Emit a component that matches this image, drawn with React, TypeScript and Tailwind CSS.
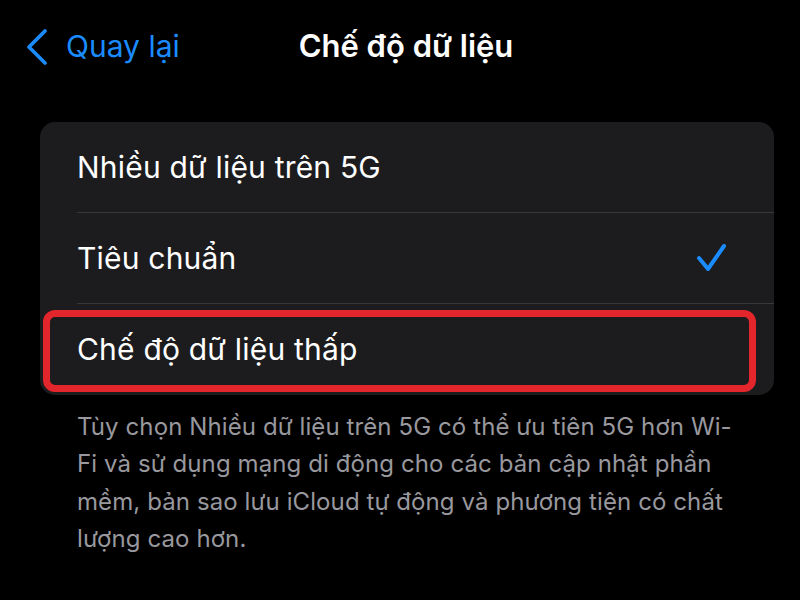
import React from 'react';

const rows = ['Nhiều dữ liệu trên 5G', 'Tiêu chuẩn', 'Chế độ dữ liệu thấp'];

const App: React.FC = () => {
  return (
    <div
      className="relative w-[800px] h-[600px] overflow-hidden bg-black text-white"
      style={{ fontFamily: 'Inter, "Noto Sans", sans-serif' }}
    >
      {/* nav bar */}
      <div className="relative flex items-center h-[92px] pl-[26px]">
        <svg width="22" height="36" viewBox="0 0 22 36" className="mt-[1px]">
          <path d="M19 2 L3 18 L19 34" fill="none" stroke="#1a8cff" strokeWidth="3.6" strokeLinecap="round" strokeLinejoin="round" />
        </svg>
        <span className="ml-[18px] text-[30px] text-[#1a8cff]">Quay lại</span>
        <span className="absolute left-1/2 -translate-x-1/2 ml-[6px] text-[31px] font-semibold">
          Chế độ dữ liệu
        </span>
      </div>

      {/* options card */}
      <div className="ml-[40px] mt-[30px] w-[734px] rounded-[15px] bg-[#1c1c1e]">
        {rows.map((label, i) => (
          <div key={label} className="pl-[37px]">
            <div
              className={`flex items-center justify-between h-[91px] pr-[46px] ${
                i < rows.length - 1 ? 'border-b border-[#38383a]' : ''
              }`}
            >
              <span className="text-[30px] tracking-[0.2px]">{label}</span>
              {i === 1 && (
                <svg width="32" height="32" viewBox="0 0 32 32">
                  <path d="M3 16 L12 27 L28 4" fill="none" stroke="#1a8cff" strokeWidth="4" strokeLinecap="round" strokeLinejoin="round" />
                </svg>
              )}
            </div>
          </div>
        ))}
      </div>

      {/* highlight */}
      <div className="absolute left-[43px] top-[310px] w-[713px] h-[82px] rounded-[12px] border-[7px] border-[#e3262b]" />

      {/* footer note */}
      <p className="ml-[77px] mt-[13px] w-[700px] text-[24px] leading-[37.4px] tracking-[0.1px] text-[#98989e]">
        Tùy chọn Nhiều dữ liệu trên 5G có thể ưu tiên 5G hơn Wi-
        <br />
        Fi và sử dụng mạng di động cho các bản cập nhật phần
        <br />
        mềm, bản sao lưu iCloud tự động và phương tiện có chất
        <br />
        lượng cao hơn.
      </p>
    </div>
  );
};

export default App;
